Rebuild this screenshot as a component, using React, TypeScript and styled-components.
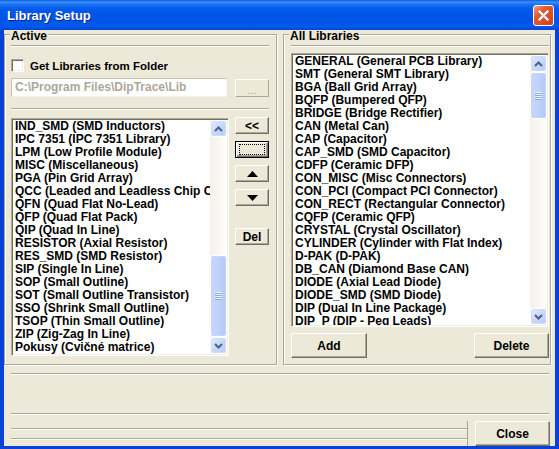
import { createGlobalStyle, styled } from 'styled-components';

const activeLibs = [
  'IND_SMD (SMD Inductors)',
  'IPC 7351 (IPC 7351 Library)',
  'LPM (Low Profile Module)',
  'MISC (Miscellaneous)',
  'PGA (Pin Grid Array)',
  'QCC (Leaded and Leadless Chip Carrier)',
  'QFN (Quad Flat No-Lead)',
  'QFP (Quad Flat Pack)',
  'QIP (Quad In Line)',
  'RESISTOR (Axial Resistor)',
  'RES_SMD (SMD Resistor)',
  'SIP (Single In Line)',
  'SOP (Small Outline)',
  'SOT (Small Outline Transistor)',
  'SSO (Shrink Small Outline)',
  'TSOP (Thin Small Outline)',
  'ZIP (Zig-Zag In Line)',
  'Pokusy (Cvičné matrice)',
];

const allLibs = [
  'GENERAL (General PCB Library)',
  'SMT (General SMT Library)',
  'BGA (Ball Grid Array)',
  'BQFP (Bumpered QFP)',
  'BRIDGE (Bridge Rectifier)',
  'CAN (Metal Can)',
  'CAP (Capacitor)',
  'CAP_SMD (SMD Capacitor)',
  'CDFP (Ceramic DFP)',
  'CON_MISC (Misc Connectors)',
  'CON_PCI (Compact PCI Connector)',
  'CON_RECT (Rectangular Connector)',
  'CQFP (Ceramic QFP)',
  'CRYSTAL (Crystal Oscillator)',
  'CYLINDER (Cylinder with Flat Index)',
  'D-PAK (D-PAK)',
  'DB_CAN (Diamond Base CAN)',
  'DIODE (Axial Lead Diode)',
  'DIODE_SMD (SMD Diode)',
  'DIP (Dual In Line Package)',
  'DIP_P (DIP - Peg Leads)',
];

const GlobalStyle = createGlobalStyle`
  html, body {
    margin: 0;
    padding: 0;
  }
  body {
    width: 559px;
    height: 449px;
    overflow: hidden;
    font-family: 'Liberation Sans', Arial, sans-serif;
  }
`;

const SWindow = styled.div`
  display: flex;
  flex-direction: column;
  width: 559px;
  height: 449px;
`;

const STitleBar = styled.div`
  flex: none;
  display: flex;
  align-items: center;
  justify-content: space-between;
  box-sizing: border-box;
  height: 30px;
  padding: 0 5px 0 7px;
  background: linear-gradient(
    to bottom,
    #0a5ae6 0%,
    #3d8ffa 7%,
    #1b74f2 14%,
    #0058ee 32%,
    #0054e3 62%,
    #0058ee 88%,
    #0046d3 100%
  );
`;

const STitle = styled.div`
  color: #fff;
  font: bold 13px 'Liberation Sans', Arial, sans-serif;
  text-shadow: 1px 1px #0b2a8c;
`;

const SCloseBox = styled.div`
  width: 21px;
  height: 21px;
  box-sizing: border-box;
  border: 1px solid #fff;
  border-radius: 3px;
  background: linear-gradient(135deg, #ef9c82 0%, #e15b35 35%, #cc3f17 100%);
  display: flex;
  align-items: center;
  justify-content: center;
`;

const SClient = styled.div`
  flex: 1;
  min-height: 0;
  display: flex;
  flex-direction: column;
  background: #ece9d8;
  border: 4px solid #0842d6;
  border-top: 0;
  border-bottom-width: 3px;
`;

const SPanels = styled.div`
  display: flex;
  gap: 6px;
  padding-right: 4px;
  margin-top: 4px;
`;

const SGroup = styled.div<{ $width: number; $pad: string }>`
  position: relative;
  flex: none;
  width: ${({ $width }) => $width}px;
  box-sizing: border-box;
  padding: ${({ $pad }) => $pad};
  display: flex;
  flex-direction: column;
  border: 1px solid #aca899;
  box-shadow: inset 1px 1px #fff, 1px 1px #fff;
`;

const SGroupLabel = styled.div`
  position: absolute;
  top: -5px;
  left: 5px;
  padding: 0 1px;
  background: #ece9d8;
  font: bold 12px/13px 'Liberation Sans', Arial, sans-serif;
  color: #000;
`;

const SEtch = styled.div<{ $gap?: number }>`
  flex: none;
  height: 0;
  margin-top: ${({ $gap }) => $gap ?? 0}px;
  border-top: 1px solid #aca899;
  border-bottom: 1px solid #fff;
`;

const SCheckRow = styled.label`
  display: flex;
  align-items: center;
  height: 13px;
  margin-top: 12px;
  font: bold 11.5px 'Liberation Sans', Arial, sans-serif;
  color: #000;
`;

const SCheckBox = styled.span`
  width: 13px;
  height: 13px;
  box-sizing: border-box;
  margin-right: 6px;
  background: #fff;
  border: 1px solid;
  border-color: #aca899 #fff #fff #aca899;
  box-shadow: inset 1px 1px #716f64, inset -1px -1px #f1efe2;
`;

const SPathRow = styled.div`
  display: flex;
  align-items: flex-start;
  gap: 8px;
  margin-top: 6px;
`;

const SEdit = styled.div`
  width: 217px;
  height: 19px;
  box-sizing: border-box;
  padding-left: 3px;
  background: #fff;
  border: 1px solid;
  border-color: #c5c2b2 #f4f3ee #f4f3ee #c5c2b2;
  color: #aca899;
  font: bold 12px/17px 'Liberation Sans', Arial, sans-serif;
  white-space: nowrap;
`;

const SButton = styled.div<{ $w: number; $h: number; $focused?: boolean; $disabled?: boolean }>`
  flex: none;
  width: ${({ $w }) => $w}px;
  height: ${({ $h }) => $h}px;
  box-sizing: border-box;
  display: flex;
  align-items: center;
  justify-content: center;
  background: #ece9d8;
  font: bold 12px 'Liberation Sans', Arial, sans-serif;
  color: ${({ $disabled }) => ($disabled ? '#aca899' : '#000')};
  border: 1px solid;
  border-color: ${({ $focused, $disabled }) =>
    $focused ? '#000' : $disabled ? '#fff #aca899 #aca899 #fff' : '#fff #716f64 #716f64 #fff'};
  box-shadow: ${({ $focused, $disabled }) =>
    $focused
      ? 'inset 1px 1px #fff, inset -1px -1px #716f64, inset -2px -2px #aca899'
      : $disabled
        ? 'none'
        : 'inset -1px -1px #aca899'};
`;

const SFocusRect = styled.span`
  flex: 1;
  align-self: stretch;
  margin: 2px 3px;
  border: 1px dotted #000;
`;

const SDots = styled.span`
  font-weight: normal;
  font-size: 11px;
  line-height: 11px;
  margin-top: 4px;
`;

const SListRow = styled.div`
  display: flex;
  align-items: flex-start;
  gap: 6px;
  margin-top: 8px;
`;

const SList = styled.div<{ $w: number; $h: number; $gap?: number }>`
  flex: none;
  width: ${({ $w }) => $w}px;
  height: ${({ $h }) => $h}px;
  margin-top: ${({ $gap }) => $gap ?? 0}px;
  box-sizing: border-box;
  padding: 1px;
  display: flex;
  background: #fff;
  border: 1px solid;
  border-color: #aca899 #fff #fff #aca899;
  box-shadow: inset 1px 1px #716f64, inset -1px -1px #f1efe2;
`;

const SItems = styled.div`
  flex: 1;
  min-width: 0;
  overflow: hidden;
  padding-left: 2px;
`;

const SItem = styled.div`
  height: 13px;
  font: bold 12px/13px 'Liberation Sans', Arial, sans-serif;
  color: #000;
  white-space: nowrap;
`;

const SScrollBar = styled.div`
  flex: none;
  width: 17px;
  display: flex;
  flex-direction: column;
  background: linear-gradient(to right, #f3f1ea, #fefefb);
`;

const SScrollButton = styled.div`
  flex: none;
  height: 17px;
  box-sizing: border-box;
  display: flex;
  align-items: center;
  justify-content: center;
  border: 1px solid #fff;
  border-radius: 3px;
  background: linear-gradient(135deg, #e3ebfe 0%, #c8d8fc 50%, #b6cbf8 100%);
  box-shadow: inset 0 0 0 1px #cfdcf9;
`;

const STrack = styled.div`
  flex: 1;
  min-height: 0;
  display: flex;
  flex-direction: column;
`;

const SThumb = styled.div`
  flex: none;
  box-sizing: border-box;
  display: flex;
  align-items: center;
  justify-content: center;
  border: 1px solid #fff;
  border-radius: 3px;
  background: linear-gradient(to right, #c9d9fd 0%, #bdd0fb 60%, #b2c7f6 100%);
  box-shadow: inset 0 0 0 1px #c4d5fb;
`;

const SGrip = styled.span`
  width: 7px;
  height: 8px;
  background: repeating-linear-gradient(to bottom, #eef4ff 0 1px, #8cabe9 1px 2px);
`;

const SSideButtons = styled.div`
  display: flex;
  flex-direction: column;
  gap: 7px;
  margin-top: -1px;
`;

const SDelSpacer = styled.div`
  height: 8px;
`;

const SButtonRow = styled.div`
  display: flex;
  justify-content: space-between;
  margin-top: 6px;
`;

const SFooterLines = styled.div`
  display: flex;
  flex-direction: column;
  padding: 0 6px 0 7px;
`;

const SFooter = styled.div`
  flex: 1;
  display: flex;
  gap: 7px;
  padding: 6px 5px 0 7px;
`;

const SStatus = styled.div`
  flex: 1;
  display: flex;
  flex-direction: column;
  border-right: 1px solid #aca899;
`;

const ArrowUp = () => (
  <svg width='9' height='6' viewBox='0 0 9 6'>
    <path d='M1 5 L4.5 1.5 L8 5' fill='none' stroke='#4d6185' strokeWidth='2' />
  </svg>
);

const ArrowDown = () => (
  <svg width='9' height='6' viewBox='0 0 9 6'>
    <path d='M1 1 L4.5 4.5 L8 1' fill='none' stroke='#4d6185' strokeWidth='2' />
  </svg>
);

const Triangle = ({ down }: { down?: boolean }) => (
  <svg width='11' height='6' viewBox='0 0 11 6'>
    <polygon points={down ? '0,0 11,0 5.5,6' : '0,6 11,6 5.5,0'} fill='#000' />
  </svg>
);

const ScrollBar = ({ thumbTop, thumbHeight }: { thumbTop: number; thumbHeight: number }) => (
  <SScrollBar>
    <SScrollButton>
      <ArrowUp />
    </SScrollButton>
    <STrack>
      <SThumb style={{ marginTop: thumbTop, height: thumbHeight }}>
        <SGrip />
      </SThumb>
    </STrack>
    <SScrollButton>
      <ArrowDown />
    </SScrollButton>
  </SScrollBar>
);

const App = () => (
  <SWindow>
    <GlobalStyle />
    <STitleBar>
      <STitle>Library Setup</STitle>
      <SCloseBox>
        <svg width='11' height='11' viewBox='0 0 11 11'>
          <path d='M1.5 1.5 L9.5 9.5 M9.5 1.5 L1.5 9.5' stroke='#fff' strokeWidth='2.2' strokeLinecap='square' />
        </svg>
      </SCloseBox>
    </STitleBar>
    <SClient>
      <SPanels>
        <SGroup $width={273} $pad='10px 7px 6px 6px'>
          <SGroupLabel>Active</SGroupLabel>
          <SEtch />
          <SCheckRow>
            <SCheckBox />
            Get Libraries from Folder
          </SCheckRow>
          <SPathRow>
            <SEdit>C:\Program Files\DipTrace\Lib</SEdit>
            <SButton $w={34} $h={18} $disabled style={{ marginTop: 1 }}>
              <SDots>...</SDots>
            </SButton>
          </SPathRow>
          <SEtch $gap={11} />
          <SListRow>
            <SList $w={218} $h={238}>
              <SItems>
                {activeLibs.map((lib) => (
                  <SItem key={lib}>{lib}</SItem>
                ))}
              </SItems>
              <ScrollBar thumbTop={118} thumbHeight={82} />
            </SList>
            <SSideButtons>
              <SButton $w={34} $h={17}>&lt;&lt;</SButton>
              <SButton $w={34} $h={17} $focused>
                <SFocusRect />
              </SButton>
              <SButton $w={34} $h={17}>
                <Triangle />
              </SButton>
              <SButton $w={34} $h={17}>
                <Triangle down />
              </SButton>
              <SDelSpacer />
              <SButton $w={34} $h={17}>Del</SButton>
            </SSideButtons>
          </SListRow>
        </SGroup>
        <SGroup $width={268} $pad='10px 1px 6px 7px'>
          <SGroupLabel>All Libraries</SGroupLabel>
          <SEtch />
          <SList $w={258} $h={274} $gap={6}>
            <SItems>
              {allLibs.map((lib) => (
                <SItem key={lib}>{lib}</SItem>
              ))}
            </SItems>
            <ScrollBar thumbTop={0} thumbHeight={47} />
          </SList>
          <SButtonRow>
            <SButton $w={76} $h={25}>Add</SButton>
            <SButton $w={75} $h={25}>Delete</SButton>
          </SButtonRow>
        </SGroup>
      </SPanels>
      <SFooterLines>
        <SEtch $gap={8} />
        <SEtch $gap={38} />
      </SFooterLines>
      <SFooter>
        <SStatus>
          <SEtch $gap={7} />
          <SEtch $gap={8} />
        </SStatus>
        <SButton $w={75} $h={25}>Close</SButton>
      </SFooter>
    </SClient>
  </SWindow>
);

export default App;
